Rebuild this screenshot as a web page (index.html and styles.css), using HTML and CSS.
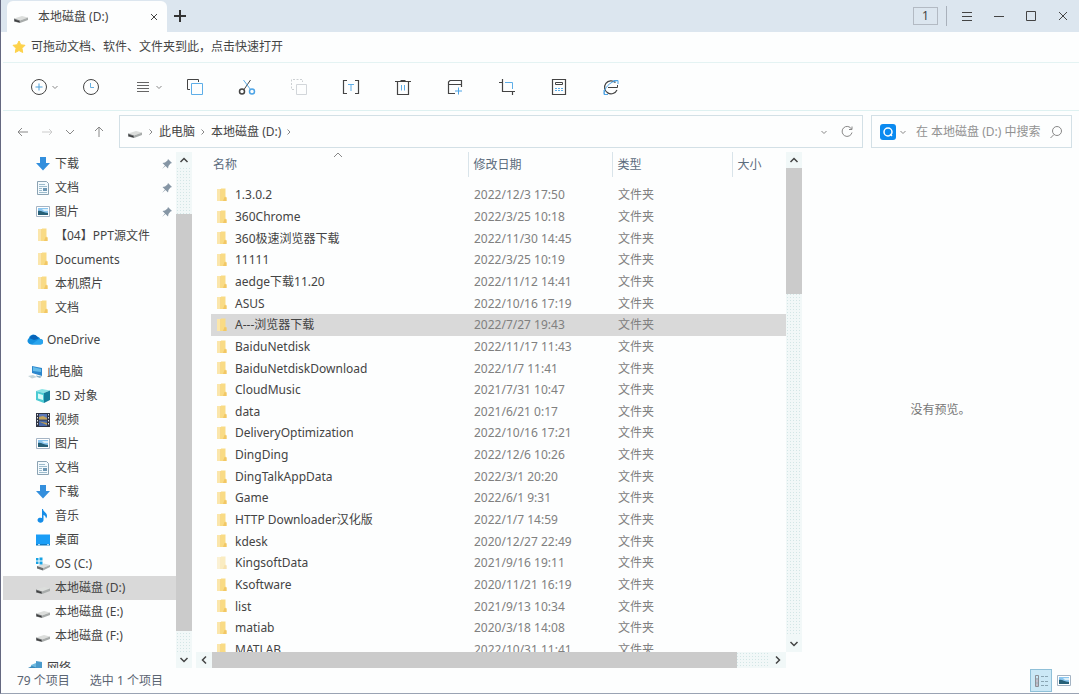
FILE: index.html
```
<!DOCTYPE html>
<html lang="zh-CN">
<head>
    <meta charset="UTF-8">
    <meta name="viewport" content="width=device-width, initial-scale=1.0">
    <title>本地磁盘 (D:)</title>
    <link rel="stylesheet" href="styles.css">
</head>
<body>
    <svg class="sprite" aria-hidden="true">
        <symbol id="drive" viewBox="0 0 16 16">
            <path d="M1 9.500 9 7 15 8.500 7 11.500Z" fill="#dcdedc"/>
            <path d="M1 9.500 7 11.500V14L1 12.500Z" fill="#6a6d6f"/>
            <path d="M7 11.500 15 8.500V11L7 14Z" fill="#a8acab"/>
            <path d="M2 11.500 6 12.700" stroke="#333" stroke-width="1"/>
        </symbol>
        <symbol id="folder" viewBox="0 0 12 16">
            <path d="M1 1H7V13H1Z" fill="#f8d98a"/>
            <path d="M1 1H4V13H1Z" fill="#fbe6ab"/>
            <path d="M5 .5H9.500V8.500L10.500 9.500V13H4V10L5 8Z" fill="#f9db85"/>
            <path d="M8.500 9 10.500 9.500V13H7Z" fill="#f2c765"/>
        </symbol>
        <symbol id="down" viewBox="0 0 16 16">
            <path d="M5 1H11V7H15L8 14.500 1 7H5Z" fill="#338fdd"/>
        </symbol>
        <symbol id="doc" viewBox="0 0 16 16">
            <path d="M2.500 1.500H11.500L13.500 3.500V14.500H2.500Z" fill="#f4fafd" stroke="#8ba3b3"/>
            <path d="M4 4.500H10M4 6.500H12M4 8.500H7M4 10.500H7M4 12.500H12" stroke="#9dbccd"/>
            <path d="M8 8H12V11H8Z" fill="#6d96b3"/>
        </symbol>
        <symbol id="picture" viewBox="0 0 16 16">
            <path d="M1.500 2.500H14.500V12.500H1.500Z" fill="#fff" stroke="#a4b4c4"/>
            <path d="M3 4H13V11H3Z" fill="#8bc6ef"/>
            <path d="M3 7C6 6 8 9 13 9V11H3Z" fill="#276077"/>
            <path d="M7 5H13V7H9Z" fill="#d9effa"/>
        </symbol>
        <symbol id="cloud" viewBox="0 0 18 16">
            <path d="M5 13A4 4 0 0 1 2 6 5 5 0 0 1 11 4 4.500 4.500 0 0 1 15 7 3 3 0 0 1 15 13Z" fill="#1490df"/>
            <path d="M3 6A5 5 0 0 1 11.500 4L13 6.500 8 8Z" fill="#0864b8"/>
            <path d="M5 13 12 8 15 7A3 3 0 0 1 15 13Z" fill="#2aa5ee"/>
        </symbol>
        <symbol id="computer" viewBox="0 0 16 16">
            <path d="M5 2 15 4V12L5 9Z" fill="#2b86cc"/>
            <path d="M6 3 14 5V8L6 7Z" fill="#65bce9"/>
            <path d="M1 12 6 11 10 13 5 14.500Z" fill="#c4d4d9"/>
            <path d="M9 11.500 15 12.500 13 14 10 13Z" fill="#8fb3c5"/>
        </symbol>
        <symbol id="cube" viewBox="0 0 16 16">
            <path d="M1 3 7 1 15 2.500 9 5Z" fill="#8be4e6"/>
            <path d="M1 3 9 5V15L1 12Z" fill="#4bcbd3"/>
            <path d="M9 5 15 2.500V12L9 15Z" fill="#147f9c"/>
            <path d="M3 5.500 8 7V12L3 10.500Z" fill="#d9fbf8"/>
        </symbol>
        <symbol id="film" viewBox="0 0 16 16">
            <path d="M1 1H15V15H1Z" fill="#303544"/>
            <path d="M4 2H12V7.500H4Z" fill="#5d79b8"/>
            <path d="M4 5 8 4 12 6V7.500H4Z" fill="#c2a45c"/>
            <path d="M4 8.500H12V14H4Z" fill="#486aab"/>
            <path d="M4 9.500 12 11V13Z" fill="#bd9d50"/>
            <path d="M2.500 2V14M13.500 2V14" stroke="#e3e7ed" stroke-dasharray="1.500 1.500"/>
        </symbol>
        <symbol id="music" viewBox="0 0 16 16">
            <path d="M8 1C8 4 12 4.500 12 8 12 9.500 11 10.500 11 10.500 11 8 9 7 8.500 7V12A3 2.500 0 1 1 7 10V1Z" fill="#158de8"/>
        </symbol>
        <symbol id="desktop" viewBox="0 0 16 16">
            <path d="M1 2.500H15V13H1Z" fill="#1a9df6"/>
            <path d="M1 12H15V13.500H1Z" fill="#137abf"/>
            <path d="M3 12.700H5M12 12.700H14" stroke="#d9efff"/>
        </symbol>
        <symbol id="system" viewBox="0 0 16 16">
            <path d="M2 10 9 7.500 15 9 8 12Z" fill="#dcdedc"/>
            <path d="M2 10 8 12V14.500L2 12.500Z" fill="#6a6d6f"/>
            <path d="M8 12 15 9V11L8 14.500Z" fill="#a8acab"/>
            <path d="M1 2H3.500V4.500H1ZM4.500 1.500H7.500V4.500H4.500ZM1 5.500H3.500V8H1ZM4.500 5.500H7.500V8.500H4.500Z" fill="#16a2e3"/>
        </symbol>
        <symbol id="network" viewBox="0 0 16 16">
            <path d="M9 1 15 2V13L9 11Z" fill="#4a9acb"/>
            <path d="M4 5 9 3V11H4Z" fill="#6db9df"/>
            <path d="M1 8 5 6 13 9V13H1Z" fill="#3989bb"/>
        </symbol>
        <symbol id="pin" viewBox="0 0 12 12">
            <path d="M7 1 11 5 9.500 5.500 7.500 8 7 10.500 4.500 8 1 11 4 7.500 1.500 5 4 4.500 6.500 2.500Z" fill="#8696a5"/>
        </symbol>
        <symbol id="chev-down" viewBox="0 0 8 8">
            <path d="M1.500 3 4 5.500 6.500 3" fill="none" stroke="currentColor"/>
        </symbol>
        <symbol id="chev-right" viewBox="0 0 8 8">
            <path d="M2.500 1.500 5 4 2.500 6.500" fill="none" stroke="currentColor"/>
        </symbol>
        <symbol id="bar-up" viewBox="0 0 16 16">
            <path d="M4.500 10 8 6.500 11.500 10" fill="none" stroke="#444" stroke-width="1.500"/>
        </symbol>
        <symbol id="bar-down" viewBox="0 0 16 16">
            <path d="M4.500 6 8 9.500 11.500 6" fill="none" stroke="#444" stroke-width="1.500"/>
        </symbol>
        <symbol id="bar-left" viewBox="0 0 16 16">
            <path d="M10 4.500 6.500 8 10 11.500" fill="none" stroke="#444" stroke-width="1.500"/>
        </symbol>
        <symbol id="bar-right" viewBox="0 0 16 16">
            <path d="M6 4.500 9.500 8 6 11.500" fill="none" stroke="#444" stroke-width="1.500"/>
        </symbol>
    </svg>

    <div class="window">
        <header class="titlebar">
            <div class="tab">
                <svg class="icon"><use href="#drive"/></svg>
                <span class="tab-name">本地磁盘 (D:)</span>
                <button class="tab-close" aria-label="关闭标签">
                    <svg width="8" height="8"><path d="M1 1 7 7M7 1 1 7" stroke="#444"/></svg>
                </button>
            </div>
            <button class="tab-add" aria-label="新建标签">
                <svg width="12" height="12"><path d="M6 0V12M0 6H12" stroke="#333" stroke-width="2"/></svg>
            </button>
            <div class="window-buttons">
                <button class="count">1</button>
                <span class="divider"></span>
                <button aria-label="菜单"><svg width="12" height="12"><path d="M1 2.500H11M1 6.500H11M1 10.500H11" stroke="#444"/></svg></button>
                <button aria-label="最小化"><svg width="12" height="12"><path d="M1 6.500H11" stroke="#444"/></svg></button>
                <button aria-label="最大化"><svg width="12" height="12"><path d="M1.500 1.500H10.500V10.500H1.500Z" fill="none" stroke="#444"/></svg></button>
                <button aria-label="关闭"><svg width="12" height="12"><path d="M2 2 10 10M10 2 2 10" stroke="#444"/></svg></button>
            </div>
        </header>

        <div class="quickbar">
            <svg width="14" height="14" viewBox="0 0 14 14"><path d="M7 1 8.800 4.800 13 5.300 10 8.300 10.700 12.500 7 10.500 3.300 12.500 4 8.300 1 5.300 5.200 4.800Z" fill="#fdd24a" stroke="#fdd24a" stroke-linejoin="round"/></svg>
            <span>可拖动文档、软件、文件夹到此，点击快速打开</span>
        </div>

        <div class="toolbar">
            <button aria-label="新建">
                <svg class="tool"><circle cx="9" cy="9" r="7.500" stroke="#444"/><path d="M9 5.500V12.500M5.500 9H12.500" stroke="#4d9fd8"/></svg>
                <svg class="chev"><use href="#chev-down"/></svg>
            </button>
            <button aria-label="历史">
                <svg class="tool"><circle cx="9" cy="9" r="7.500" stroke="#444"/><path d="M8.500 5V9.500H12" stroke="#67afe0"/></svg>
            </button>
            <button aria-label="排列">
                <svg class="tool"><path d="M3 4.500H15M3 7.500H15M3 10.500H15M3 13.500H15" stroke="#666"/></svg>
                <svg class="chev"><use href="#chev-down"/></svg>
            </button>
            <button aria-label="复制">
                <svg class="tool"><path d="M4 11.500H1.500V1.500H12.500V4" stroke="#444"/><path d="M5.500 5.500H16.500V16.500H5.500Z" stroke="#5eaee8"/></svg>
            </button>
            <button aria-label="剪切">
                <svg class="tool"><path d="M12.500 2 6 11.500" stroke="#444"/><path d="M5.500 2 12.500 11.500" stroke="#5eaee8"/><circle cx="4" cy="13.500" r="2.500" stroke="#444" stroke-width="1.500"/><circle cx="14" cy="13.500" r="2.500" stroke="#4da4e6" stroke-width="1.500"/></svg>
            </button>
            <button aria-label="粘贴" disabled>
                <svg class="tool"><path d="M4 11.500H1.500V1.500H12.500V4" stroke="#ccd0d3" stroke-dasharray="2 1.500"/><path d="M6.500 6.500H16.500V16.500H6.500Z" stroke="#d2d6da"/></svg>
            </button>
            <button aria-label="重命名">
                <svg class="tool"><path d="M5 2.500H1.500V15.500H5M13 2.500H16.500V15.500H13" stroke="#444" stroke-width="1.200"/><path d="M6 6.500H12M9 6.500V13" stroke="#5eaee8"/></svg>
            </button>
            <button aria-label="删除">
                <svg class="tool"><path d="M1 3.500H17M6.500 2.500H11.500M3.500 3.500V16.500H14.500V3.500" stroke="#444" stroke-width="1.200"/><path d="M7.500 7V12.500M10.500 7V12.500" stroke="#5eaee8"/></svg>
            </button>
            <button aria-label="新建文件夹">
                <svg class="tool"><path d="M9 15.500H2.500V4L4 2.500H15.500V9M2.500 6.500H15.500" stroke="#444" stroke-width="1.200"/><path d="M12.500 9.500V16.500M9 13H16" stroke="#4da4e6"/></svg>
            </button>
            <button aria-label="截图">
                <svg class="tool"><path d="M1 4.500H4.500M4.500 1V13.500H17M14.500 13.500V17" stroke="#444" stroke-width="1.200"/><path d="M7 4.500H14.500V11" stroke="#5eaee8"/></svg>
            </button>
            <button aria-label="计算">
                <svg class="tool"><path d="M2.500 1.500H15.500V16.500H2.500Z" stroke="#444" stroke-width="1.200"/><path d="M5.500 4.500H12.500V6.500H5.500Z" stroke="#444"/><path d="M5 10.500H13M5 12.500H13" stroke="#5eaee8" stroke-dasharray="2 1"/></svg>
            </button>
            <button aria-label="刷新">
                <svg class="tool"><path d="M13.500 4.500A6.500 6.500 0 1 0 15 12" stroke="#444" stroke-width="1.200"/><path d="M6 9.500H15.500V7" stroke="#444"/><path d="M2.500 16.500C1 11 8 3 16 2.500M11.500 2.500H16V6M2 12V16.500H6" stroke="#4da4e6"/></svg>
            </button>
        </div>

        <div class="navbar">
            <div class="nav-buttons">
                <button aria-label="后退"><svg width="14" height="14"><path d="M12 7H2M6 3 2 7 6 11" stroke="#888"/></svg></button>
                <button aria-label="前进"><svg width="14" height="14"><path d="M2 7H12M9 4 12 7 9 10" stroke="#ccc"/></svg></button>
                <button aria-label="最近"><svg width="14" height="14"><path d="M3 5 7 9 11 5" stroke="#888"/></svg></button>
                <button class="up" aria-label="上移"><svg width="14" height="14"><path d="M7 12V2M3 6 7 2 11 6" stroke="#888"/></svg></button>
            </div>
            <nav class="address">
                <svg class="icon"><use href="#drive"/></svg>
                <svg class="chev"><use href="#chev-right"/></svg>
                <a href="#">此电脑</a>
                <svg class="chev"><use href="#chev-right"/></svg>
                <a href="#">本地磁盘 (D:)</a>
                <svg class="chev"><use href="#chev-right"/></svg>
                <button class="history" aria-label="展开"><svg class="chev"><use href="#chev-down"/></svg></button>
                <button aria-label="刷新"><svg width="14" height="14"><path d="M11.500 4A5 5 0 1 0 12 7.500M12 1.500V4.500H9" stroke="#888"/></svg></button>
            </nav>
            <div class="search">
                <span class="search-logo"><svg width="16" height="16"><circle cx="8" cy="8" r="4" stroke="#fff" stroke-width="1.500"/><path d="M10 10 12 12" stroke="#fff" stroke-width="1.500"/></svg></span>
                <svg class="chev"><use href="#chev-down"/></svg>
                <input type="text" aria-label="搜索" placeholder="在 本地磁盘 (D:) 中搜索">
                <button aria-label="搜索"><svg width="14" height="14"><circle cx="8" cy="6" r="4.500" stroke="#888"/><path d="M5 9.500 1.500 13" stroke="#888"/></svg></button>
            </div>
        </div>

        <main class="content">
            <aside class="sidebar">
                <ul class="tree">
                    <li><a href="#"><svg class="icon"><use href="#down"/></svg>下载<svg class="pin"><use href="#pin"/></svg></a></li>
                    <li><a href="#"><svg class="icon"><use href="#doc"/></svg>文档<svg class="pin"><use href="#pin"/></svg></a></li>
                    <li><a href="#"><svg class="icon"><use href="#picture"/></svg>图片<svg class="pin"><use href="#pin"/></svg></a></li>
                    <li><a href="#"><svg class="icon"><use href="#folder"/></svg>【04】PPT源文件</a></li>
                    <li><a href="#"><svg class="icon"><use href="#folder"/></svg>Documents</a></li>
                    <li><a href="#"><svg class="icon"><use href="#folder"/></svg>本机照片</a></li>
                    <li><a href="#"><svg class="icon"><use href="#folder"/></svg>文档</a></li>
                    <li class="root"><a href="#"><svg class="icon"><use href="#cloud"/></svg>OneDrive</a></li>
                    <li class="root"><a href="#"><svg class="icon"><use href="#computer"/></svg>此电脑</a></li>
                    <li><a href="#"><svg class="icon"><use href="#cube"/></svg>3D 对象</a></li>
                    <li><a href="#"><svg class="icon"><use href="#film"/></svg>视频</a></li>
                    <li><a href="#"><svg class="icon"><use href="#picture"/></svg>图片</a></li>
                    <li><a href="#"><svg class="icon"><use href="#doc"/></svg>文档</a></li>
                    <li><a href="#"><svg class="icon"><use href="#down"/></svg>下载</a></li>
                    <li><a href="#"><svg class="icon"><use href="#music"/></svg>音乐</a></li>
                    <li><a href="#"><svg class="icon"><use href="#desktop"/></svg>桌面</a></li>
                    <li><a href="#"><svg class="icon"><use href="#system"/></svg>OS (C:)</a></li>
                    <li class="selected"><a href="#"><svg class="icon"><use href="#drive"/></svg>本地磁盘 (D:)</a></li>
                    <li><a href="#"><svg class="icon"><use href="#drive"/></svg>本地磁盘 (E:)</a></li>
                    <li><a href="#"><svg class="icon"><use href="#drive"/></svg>本地磁盘 (F:)</a></li>
                    <li class="root"><a href="#"><svg class="icon"><use href="#network"/></svg>网络</a></li>
                </ul>
                <div class="scroll-y scroll-tree">
                    <svg class="arrow"><use href="#bar-up"/></svg>
                    <div class="track"><div class="thumb"></div></div>
                    <svg class="arrow"><use href="#bar-down"/></svg>
                </div>
            </aside>

            <section class="files">
                <div class="list">
                    <table>
                        <thead>
                            <tr>
                                <th class="col-name">名称<svg class="sort" width="10" height="6"><path d="M1 5 5 1 9 5" stroke="#888"/></svg></th>
                                <th class="col-date">修改日期</th>
                                <th class="col-type">类型</th>
                                <th class="col-size">大小</th>
                            </tr>
                        </thead>
                        <tbody>
                            <tr><td><svg class="folder"><use href="#folder"/></svg>1.3.0.2</td><td>2022/12/3 17:50</td><td>文件夹</td><td></td></tr>
                            <tr><td><svg class="folder"><use href="#folder"/></svg>360Chrome</td><td>2022/3/25 10:18</td><td>文件夹</td><td></td></tr>
                            <tr><td><svg class="folder"><use href="#folder"/></svg>360极速浏览器下载</td><td>2022/11/30 14:45</td><td>文件夹</td><td></td></tr>
                            <tr><td><svg class="folder"><use href="#folder"/></svg>11111</td><td>2022/3/25 10:19</td><td>文件夹</td><td></td></tr>
                            <tr><td><svg class="folder"><use href="#folder"/></svg>aedge下载11.20</td><td>2022/11/12 14:41</td><td>文件夹</td><td></td></tr>
                            <tr><td><svg class="folder"><use href="#folder"/></svg>ASUS</td><td>2022/10/16 17:19</td><td>文件夹</td><td></td></tr>
                            <tr class="selected"><td><svg class="folder"><use href="#folder"/></svg>A---浏览器下载</td><td>2022/7/27 19:43</td><td>文件夹</td><td></td></tr>
                            <tr><td><svg class="folder"><use href="#folder"/></svg>BaiduNetdisk</td><td>2022/11/17 11:43</td><td>文件夹</td><td></td></tr>
                            <tr><td><svg class="folder"><use href="#folder"/></svg>BaiduNetdiskDownload</td><td>2022/1/7 11:41</td><td>文件夹</td><td></td></tr>
                            <tr><td><svg class="folder"><use href="#folder"/></svg>CloudMusic</td><td>2021/7/31 10:47</td><td>文件夹</td><td></td></tr>
                            <tr><td><svg class="folder"><use href="#folder"/></svg>data</td><td>2021/6/21 0:17</td><td>文件夹</td><td></td></tr>
                            <tr><td><svg class="folder"><use href="#folder"/></svg>DeliveryOptimization</td><td>2022/10/16 17:21</td><td>文件夹</td><td></td></tr>
                            <tr><td><svg class="folder"><use href="#folder"/></svg>DingDing</td><td>2022/12/6 10:26</td><td>文件夹</td><td></td></tr>
                            <tr><td><svg class="folder"><use href="#folder"/></svg>DingTalkAppData</td><td>2022/3/1 20:20</td><td>文件夹</td><td></td></tr>
                            <tr><td><svg class="folder"><use href="#folder"/></svg>Game</td><td>2022/6/1 9:31</td><td>文件夹</td><td></td></tr>
                            <tr><td><svg class="folder"><use href="#folder"/></svg>HTTP Downloader汉化版</td><td>2022/1/7 14:59</td><td>文件夹</td><td></td></tr>
                            <tr><td><svg class="folder"><use href="#folder"/></svg>kdesk</td><td>2020/12/27 22:49</td><td>文件夹</td><td></td></tr>
                            <tr class="hidden-item"><td><svg class="folder"><use href="#folder"/></svg>KingsoftData</td><td>2021/9/16 19:11</td><td>文件夹</td><td></td></tr>
                            <tr><td><svg class="folder"><use href="#folder"/></svg>Ksoftware</td><td>2020/11/21 16:19</td><td>文件夹</td><td></td></tr>
                            <tr><td><svg class="folder"><use href="#folder"/></svg>list</td><td>2021/9/13 10:34</td><td>文件夹</td><td></td></tr>
                            <tr><td><svg class="folder"><use href="#folder"/></svg>matiab</td><td>2020/3/18 14:08</td><td>文件夹</td><td></td></tr>
                            <tr><td><svg class="folder"><use href="#folder"/></svg>MATLAB</td><td>2022/10/31 11:41</td><td>文件夹</td><td></td></tr>
                        </tbody>
                    </table>
                </div>
                <div class="scroll-y scroll-files">
                    <svg class="arrow"><use href="#bar-up"/></svg>
                    <div class="track"><div class="thumb"></div></div>
                    <svg class="arrow"><use href="#bar-down"/></svg>
                </div>
                <div class="scroll-x">
                    <svg class="arrow"><use href="#bar-left"/></svg>
                    <div class="track"><div class="thumb"></div></div>
                    <svg class="arrow"><use href="#bar-right"/></svg>
                </div>
            </section>

            <section class="preview">没有预览。</section>
        </main>

        <footer class="statusbar">
            <span>79 个项目</span>
            <span>选中 1 个项目</span>
            <div class="views">
                <button class="active" aria-label="详细信息">
                    <svg width="16" height="16"><path d="M2.500 2.500H5.500V13.500H2.500ZM2.500 6H5.500M2.500 10H5.500" stroke="#8c8f96"/><path d="M8 3.500H11M12 3.500H15M8 8.500H11M12 8.500H15M8 12.500H11M12 12.500H15" stroke="#8aa5b3"/><path d="M3.500 8H4.500M3.500 12H4.500" stroke="#b03c4c"/></svg>
                </button>
                <button aria-label="缩略图"><svg class="icon"><use href="#picture"/></svg></button>
            </div>
        </footer>
    </div>
</body>
</html>
```
FILE: styles.css
```
* {
    box-sizing: border-box;
}
body {
    margin: 0;
    font-family: "Noto Sans", "Noto Sans CJK SC", sans-serif;
    font-size: 12px;
    line-height: 20px;
    color: #444;
    background-color: #fdfefe;
}
button {
    display: flex;
    align-items: center;
    justify-content: center;
    padding: 0;
    border: none;
    background: none;
    font: inherit;
    color: inherit;
}
a {
    color: inherit;
    text-decoration: none;
}
svg {
    flex: none;
    fill: none;
}
.sprite {
    display: none;
}
.icon {
    width: 16px;
    height: 16px;
}
.chev {
    width: 8px;
    height: 8px;
    color: #888;
}
.window {
    display: flex;
    flex-direction: column;
    height: 100vh;
    border-left: 1px solid #646880;
    border-bottom: 1px solid #9aa3b3;
    padding-left: 2px;
}

/* title bar */
.titlebar {
    display: flex;
    flex: none;
    align-items: center;
    height: 32px;
    margin-left: -2px;
    padding-left: 6px;
    background-color: #dce6ef;
}
.tab {
    display: flex;
    align-items: center;
    align-self: flex-end;
    width: 160px;
    height: 31px;
    padding: 0 8px 0 6px;
    border-radius: 6px 6px 0 0;
    background-color: #fdfefe;
}
.tab-name {
    flex: 1;
    margin-left: 9px;
}
.tab-close {
    width: 10px;
    height: 16px;
}
.tab-add {
    width: 26px;
    height: 32px;
}
.window-buttons {
    display: flex;
    align-items: center;
    margin-left: auto;
}
.window-buttons button {
    width: 32px;
    height: 32px;
}
.window-buttons .count {
    width: 25px;
    height: 18px;
    border: 1px solid #b3bac3;
    line-height: 16px;
}
.divider {
    width: 1px;
    height: 20px;
    margin: 0 4px 0 8px;
    background-color: #a9b1bb;
}

/* bars */
.quickbar {
    display: flex;
    flex: none;
    align-items: center;
    gap: 5px;
    height: 31px;
    padding-left: 9px;
    border-bottom: 1px solid #e4f3f3;
}
.toolbar {
    display: flex;
    flex: none;
    height: 48px;
    padding-left: 27px;
    border-bottom: 1px solid #def1f1;
}
.toolbar button {
    gap: 3px;
    justify-content: flex-start;
    width: 52px;
}
.tool {
    width: 18px;
    height: 18px;
}
.navbar {
    display: flex;
    flex: none;
    gap: 8px;
    height: 41px;
    padding: 4px 7px 4px 0;
}
.nav-buttons {
    display: flex;
    align-items: center;
    width: 108px;
    padding-left: 8px;
}
.nav-buttons button {
    width: 24px;
    height: 24px;
}
.nav-buttons .up {
    margin-left: 5px;
}
.address,
.search {
    display: flex;
    align-items: center;
    border: 1px solid #d3e0e6;
}
.address {
    flex: 1;
    gap: 4px;
    padding: 0 8px 0 7px;
}
.address .history {
    width: 16px;
    margin-left: auto;
    margin-right: 4px;
}
.search {
    gap: 3px;
    width: 201px;
    padding: 0 8px;
}
.search-logo {
    display: flex;
    border-radius: 3px;
    background-color: #0a8af0;
}
.search input {
    flex: 1;
    min-width: 0;
    padding: 0 0 0 6px;
    border: none;
    background: none;
    font: inherit;
}
.search input::placeholder {
    color: #929292;
}

/* panes */
.content {
    display: flex;
    flex: 1;
    min-height: 0;
}
.sidebar {
    display: flex;
    width: 189px;
}
.tree {
    flex: 1;
    margin: 0;
    padding: 0;
    overflow: hidden;
    list-style: none;
}
.tree a {
    display: flex;
    align-items: center;
    gap: 4px;
    height: 24px;
    padding-left: 32px;
}
.tree .root {
    margin-top: 8px;
}
.tree .root a {
    padding-left: 24px;
}
.pin {
    width: 12px;
    height: 12px;
    margin-left: auto;
    margin-right: 3px;
}
.selected {
    background-color: #d9d9d9;
}

/* scroll bars */
.scroll-y,
.scroll-x {
    display: flex;
    background: radial-gradient(#d3e6e6 1px, #f2f8f8 1px) 0 0 / 3px 3px;
}
.scroll-y {
    flex-direction: column;
    width: 16px;
}
.arrow {
    width: 16px;
    height: 16px;
    background-color: #f1f8f8;
}
.track {
    display: flex;
    flex: 1;
    min-height: 0;
}
.thumb {
    background-color: #cbcbcb;
}
.scroll-y .thumb {
    width: 16px;
}
.scroll-tree .track {
    align-items: flex-end;
    padding-bottom: 21px;
}
.scroll-tree .thumb {
    height: 90%;
}
.scroll-files .thumb {
    height: 27%;
}
.scroll-x .thumb {
    width: 94%;
}
.scroll-x .track {
    height: 16px;
}

/* file list */
.files {
    display: grid;
    grid-template-columns: 1fr 16px;
    grid-template-rows: 1fr 16px;
    flex: 1;
    min-width: 0;
    padding-left: 4px;
}
.list {
    min-height: 0;
    padding-left: 15px;
    overflow: hidden;
}
table {
    width: 100%;
    height: 509px;
    table-layout: fixed;
    border-collapse: collapse;
}
th {
    position: relative;
    height: 25px;
    padding: 0 0 0 5px;
    border-left: 1px solid #d9e4ea;
    font-weight: normal;
    text-align: left;
    color: #5b6b7c;
}
.col-name {
    width: 257px;
    padding-left: 2px;
    border-left: none;
}
.col-date {
    width: 144px;
}
.col-type {
    width: 120px;
}
.sort {
    position: absolute;
    top: 0;
    left: 122px;
}
tbody::before {
    content: "";
    display: block;
    height: 7px;
}
td {
    padding: 0 0 0 6px;
    line-height: 20px;
    white-space: nowrap;
    color: #808080;
}
td:first-child {
    padding-left: 5px;
    color: #444;
}
.folder {
    width: 12px;
    height: 16px;
    margin-right: 7px;
    vertical-align: middle;
}
.hidden-item .folder {
    opacity: 0.5;
}
.preview {
    display: flex;
    align-items: center;
    justify-content: center;
    width: 277px;
    color: #777;
}

/* status bar */
.statusbar {
    display: flex;
    flex: none;
    align-items: center;
    gap: 20px;
    height: 25px;
    padding: 0 7px 0 14px;
    color: #5a6472;
}
.views {
    display: flex;
    gap: 4px;
    margin-left: auto;
}
.views button {
    height: 23px;
}
.views .active {
    width: 22px;
    border: 1px solid #8fc0d8;
    background-color: #cbe8f6;
}
```
